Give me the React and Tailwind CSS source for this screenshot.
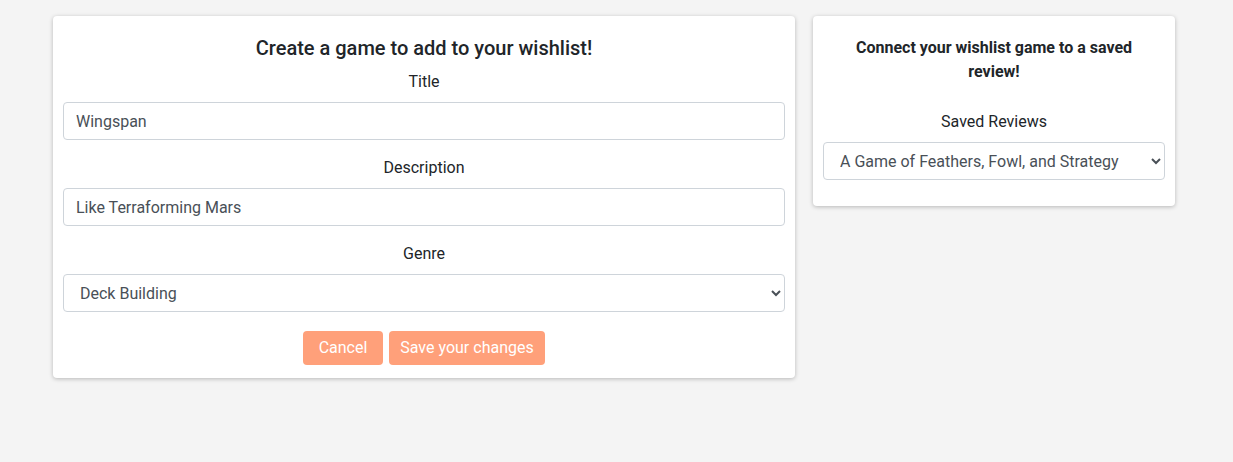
import React, { useState } from 'react';

const Field = ({ label, children }) => (
    <div className="flex flex-col">
        <label className="text-center text-[16px] leading-6 text-[#212529] mb-2">{label}</label>
        {children}
    </div>
);

const inputCls = "w-full h-[38px] px-3 border border-[#ced4da] rounded-[4px] bg-white text-[16px] text-[#495057] focus:outline-none";

export default function App() {
    const [title, setTitle] = useState('Wingspan');
    const [desc, setDesc] = useState('Like Terraforming Mars');
    const [genre, setGenre] = useState('Deck Building');
    const [review, setReview] = useState('feathers');

    return (
        <div className="min-h-[462px] bg-[#f4f4f4] font-['Roboto',sans-serif]">
            <div className="flex items-start gap-[18px] pl-[53px] pt-[16px]">
                {/* Create game card */}
                <div className="w-[742px] bg-white rounded-[4px] shadow-[0_1px_4px_rgba(0,0,0,0.25)] px-[10px] pt-[20px] pb-[13px]">
                    <h2 className="text-center text-[20px] leading-6 font-medium text-[#212529] mb-[10px]">
                        Create a game to add to your wishlist!
                    </h2>
                    <div className="flex flex-col gap-4">
                        <Field label="Title">
                            <input className={inputCls} value={title} onChange={e => setTitle(e.target.value)} />
                        </Field>
                        <Field label="Description">
                            <input className={inputCls} value={desc} onChange={e => setDesc(e.target.value)} />
                        </Field>
                        <Field label="Genre">
                            <select className={inputCls} value={genre} onChange={e => setGenre(e.target.value)}>
                                <option>Deck Building</option>
                                <option>Worker Placement</option>
                                <option>Engine Building</option>
                            </select>
                        </Field>
                    </div>
                    <div className="flex justify-center gap-[6px] mt-[19px]">
                        <button className="h-[34px] w-[80px] rounded-[4px] bg-[#ffa07a] text-white text-[16px]">Cancel</button>
                        <button className="h-[34px] w-[156px] rounded-[4px] bg-[#ffa07a] text-white text-[16px]">Save your changes</button>
                    </div>
                </div>

                {/* Connect review card */}
                <div className="w-[362px] bg-white rounded-[4px] shadow-[0_1px_4px_rgba(0,0,0,0.25)] px-[10px] pt-[20px] pb-[26px]">
                    <h5 className="text-center text-[16px] leading-6 font-bold text-[#212529] px-[28px]">
                        Connect your wishlist game to a saved review!
                    </h5>
                    <div className="mt-[26px]">
                        <Field label="Saved Reviews">
                            <select className={inputCls} value={review} onChange={e => setReview(e.target.value)}>
                                <option value="feathers">A Game of Feathers, Fowl, and Strategy</option>
                                <option value="other">Another Review</option>
                            </select>
                        </Field>
                    </div>
                </div>
            </div>
        </div>
    );
}
